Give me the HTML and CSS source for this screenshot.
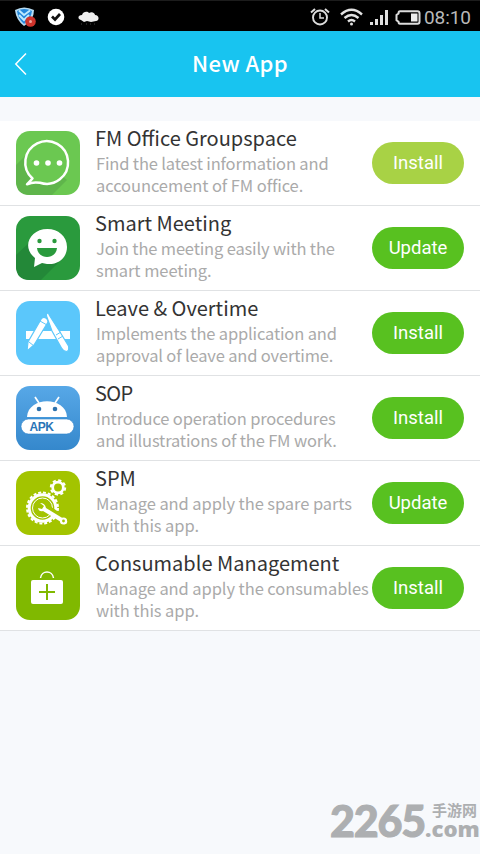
FILE: index.html
```
<!DOCTYPE html>
<html lang="en">
<head>
<meta charset="utf-8">
<title>New App</title>
<link rel="stylesheet" href="styles.css">
</head>
<body>
<div class="statusbar">
  <svg class="shield" width="23" height="22" viewBox="0 0 23 22">
    <path d="M1 4 Q10-1 20 4 Q20 14 10 20 Q2 14 1 4Z" fill="#b8dcf2"/>
    <path d="M3 5 Q10 1 18 5 Q17 13 10 18 Q4 13 3 5Z" fill="#2488dc"/>
    <path d="M5 4.500 10 9l6-4.500M5 9l5 5 5-5" fill="none" stroke="#bceaff" stroke-width="2"/>
    <circle cx="16.500" cy="15.500" r="5.300" fill="#cf332b"/><circle cx="16.500" cy="15.500" r="1.500" fill="#eda49c"/>
  </svg>
  <svg class="check" width="18" height="18" viewBox="0 0 18 18"><circle cx="9" cy="9" r="8.300" fill="#fff"/><path d="m5 8.500 3 3L13 6" fill="none" stroke="#111" stroke-width="2.700"/></svg>
  <svg class="cloud" width="21" height="15" viewBox="0 0 21 15"><path d="M3 9C-1 8 0 4 4 4 5 0 10 0 11 2c3-2 6 0 6 2 4 0 5 5 1 6l-5 1-4-1-3 1Z" fill="#eee"/><path d="M3 13h1m4 0h1m3 0h1m3 0h1" stroke="#444" stroke-width="1"/></svg>
  <span class="spacer"></span>
  <svg class="alarm" width="20" height="18" viewBox="0 0 20 18" fill="none" stroke="#ddd"><circle cx="10" cy="9.500" r="7" stroke-width="1.900"/><path d="M10 5v5h4" stroke-width="1.500"/><path d="M1 4.500 5 1m10 0 4 3.500" stroke-width="2"/></svg>
  <svg class="wifi" width="23" height="18" viewBox="0 0 23 18" fill="none" stroke="#e2e2e2" stroke-width="2.400"><path d="M1 6.500Q11.500-2.800 22 6.500M4.500 10q7-6 14 0M8 13.500q3.500-3 7 0"/><circle cx="11.500" cy="16" r="1.500" fill="#e2e2e2" stroke="none"/></svg>
  <svg class="signal" width="19" height="16" viewBox="0 0 19 16" fill="#e0e0e0"><path d="M0 13h3v3H0zM5 10h3v6H5zM10 6h3v10h-3zM15 1h3v15h-3z"/></svg>
  <svg class="battery" width="26" height="15" viewBox="0 0 26 15"><path d="M5 1.200h17.500q2 0 2 2v8.500q0 2-2 2H5q-1.500 0-1.500-2l-2-1.500V5l2-1.500Q3.500 1.200 5 1.200Z" fill="none" stroke="#ddd" stroke-width="2"/><path d="M16 3.500h6.500v8H16z" fill="#eee"/></svg>
  <span class="time">08:10</span>
</div>
<header class="header">
  <svg class="back" width="14" height="24" viewBox="0 0 14 24"><path d="M12 1.500 1.800 12 12 22.500" fill="none" stroke="#fff" stroke-width="1.500"/></svg>
  <h1>New App</h1>
</header>
<main class="list">
  <article class="row">
    <svg class="icon" viewBox="0 0 64 64"><rect width="64" height="64" rx="14" fill="#6bc851"/><path d="M0 34 14 20 51 49 36 64H14Q0 64 0 50Z" fill="#5fb54b"/><path d="M16.500 47.500A21.400 21.400 0 1 1 24 51.800Q17 50.500 11 53.300Z" fill="#6bc851" stroke="#fff" stroke-width="2.500" stroke-linejoin="round"/><g fill="#fff"><circle cx="20.500" cy="32" r="2.800"/><circle cx="32" cy="32" r="2.800"/><circle cx="43.500" cy="32" r="2.800"/></g></svg>
    <div class="info"><h2>FM Office Groupspace</h2><p><span class="tight">Find the latest information and</span><span class="snug">accouncement of FM office.</span></p></div>
    <button class="btn light">Install</button>
  </article>
  <article class="row">
    <svg class="icon" viewBox="0 0 64 64"><rect width="64" height="64" rx="14" fill="#2a9a3d"/><path d="M0 39 16 24 46 43 25 64H14Q0 64 0 50Z" fill="#238838"/><path d="M31.500 13C42 13 51 20 51 31S42 49 31 48L26 47 18 51l1-9C5 31 14 13 31.500 13Z" fill="#fff"/><g fill="#2a9a3d"><circle cx="23.500" cy="25" r="2.200"/><circle cx="38.500" cy="25" r="2.200"/><path d="M21 32h20c-1 12-19 12-20 0Z"/></g></svg>
    <div class="info"><h2>Smart Meeting</h2><p><span class="tight">Join the meeting easily with the</span><span class="snug">smart meeting.</span></p></div>
    <button class="btn">Update</button>
  </article>
  <article class="row">
    <svg class="icon" viewBox="0 0 64 64"><rect width="64" height="64" rx="14" fill="#5bc7fb"/><path d="M10 30h44v8H10z" fill="#fff"/><path d="M25.500 17.500q3-2.500 6 1L32 21 18 44l-7 6 1-9Z" fill="#fff" stroke="#5bc7fb" stroke-width="1.200"/><path d="m24 20 7 4M13 41l5 4" stroke="#5bc7fb"/><path d="M30.500 12.500q2-1 3 2L44 31l8.500 14q1 5-2 5.500-3 0-5-3.500L36 30 30.500 15Z" fill="#fff" stroke="#5bc7fb" stroke-width="1.200"/><path d="m40 34 5-3m-3 7 5-3" stroke="#5bc7fb"/></svg>
    <div class="info"><h2>Leave &amp; Overtime</h2><p><span class="tight">Implements the application and</span><span class="tight">approval of leave and overtime.</span></p></div>
    <button class="btn">Install</button>
  </article>
  <article class="row">
    <svg class="icon" viewBox="0 0 64 64"><defs><linearGradient id="blue" x2="0" y2="1"><stop stop-color="#57a8e7"/><stop offset="1" stop-color="#3588cc"/></linearGradient></defs><rect width="64" height="64" rx="14" fill="url(#blue)"/><path d="m19 11 4 6m20-6-4 6" stroke="#fff" stroke-width="1.700"/><path d="M11 31C12 10 50 10 51 31Z" fill="#fff"/><g fill="#2d72ad"><circle cx="23" cy="23" r="2.300"/><circle cx="39" cy="23" r="2.300"/></g><rect x="5" y="33" width="53" height="15" rx="7.500" fill="#fff" stroke="#2e83cb" stroke-width=".6"/><text x="13.500" y="44.700" class="apk" textLength="24.500">APK</text></svg>
    <div class="info"><h2 class="acronym">SOP</h2><p><span class="tight">Introduce operation procedures</span><span class="tight">and illustrations of the FM work.</span></p></div>
    <button class="btn">Install</button>
  </article>
  <article class="row">
    <svg class="icon" viewBox="0 0 64 64"><rect width="64" height="64" rx="14" fill="#a3c400"/><g fill="none" stroke="#fff"><circle cx="26.500" cy="37" r="13.300" stroke-width="3"/><circle cx="26.500" cy="37" r="15.500" stroke-width="2" stroke-dasharray="3 1.870"/><circle cx="26.500" cy="37" r="10" stroke-width="1"/><circle cx="42" cy="16.500" r="5.300" stroke-width="2.700"/><circle cx="42" cy="16.500" r="7.200" stroke-width="2" stroke-dasharray="3.200 2.450"/></g><path d="m28 35 20 14" stroke="#a3c400" stroke-width="7"/><path d="M24 32q5 0 6 5l18 11q4 0 3 4-3 3-6-1L27 40q-4 1-5-3l4 1 2-3Z" fill="#fff"/><circle cx="47.500" cy="50" r="3.600" fill="#fff"/><circle cx="47.500" cy="50" r="1.400" fill="#a3c400"/></svg>
    <div class="info"><h2>SPM</h2><p><span class="snug">Manage and apply the spare parts</span><span class="snug">with this app.</span></p></div>
    <button class="btn">Update</button>
  </article>
  <article class="row">
    <svg class="icon" viewBox="0 0 64 64"><rect width="64" height="64" rx="14" fill="#80b900"/><path d="M24.500 22c1-8 12-8 13 0" fill="none" stroke="#fff" stroke-width="1.500"/><rect x="15" y="24" width="32" height="24" rx="2" fill="#fff"/><path d="M31 28v16m-8-8h16" stroke="#80b900" stroke-width="2"/></svg>
    <div class="info"><h2>Consumable Management</h2><p><span class="snug">Manage and apply the consumables</span><span class="snug">with this app.</span></p></div>
    <button class="btn">Install</button>
  </article>
</main>
<footer class="watermark"><span class="digits">2265</span><span class="site"><span class="cn">手游网</span><span class="com">.com</span></span></footer>
</body>
</html>
```
FILE: styles.css
```
* { box-sizing: border-box; }
body { margin: 0; width: 480px; height: 854px; overflow: hidden; background: #f7f9fc; font-family: "Noto Sans CJK SC", sans-serif; display: flex; flex-direction: column; }
h1, h2, p { margin: 0; font-weight: 400; }
svg { display: block; flex: none; }
.statusbar { height: 31px; background: #000; border-top: 1px solid #1c1c1c; display: flex; align-items: center; padding: 2px 8px 0 14px; }
.check { margin-left: 10px; }
.cloud { margin-left: 13px; margin-top: 2px; }
.spacer { flex: 1; }
.wifi { margin-left: 10px; }
.signal { margin-left: 7px; }
.battery { margin-left: 6px; }
.time { font: 19px/24px Roboto, sans-serif; color: #b9b9b9; width: 48px; margin-left: 3px; padding-top: 1px; letter-spacing: -.1px; white-space: nowrap; }
.header { height: 66px; background: #18c4f0; display: grid; grid-template-columns: 40px 1fr 40px; align-items: center; }
.back { margin-left: 14px; }
.header h1 { color: #fff; font-size: 22px; line-height: 32px; font-weight: 500; text-align: center; letter-spacing: .4px; padding-bottom: 4px; }
.list { margin-top: 24px; }
.row { height: 85px; background: #fff; border-bottom: 1px solid #e0e2e4; display: flex; align-items: flex-start; padding: 10px 16px 0; }
.icon { width: 64px; height: 64px; }
.info { width: 276px; margin-left: 16px; flex: none; white-space: nowrap; }
.info h2 { font-size: 20px; line-height: 24px; margin: -5px 0 0 -1px; color: #333; }
.info h2.acronym { letter-spacing: -.6px; }
.info p { font-size: 16.500px; line-height: 22px; color: #aaa; margin-top: 2px; }
.info p span { display: block; }
.tight { letter-spacing: -.16px; }
.snug { letter-spacing: -.08px; }
.btn { width: 92px; height: 42px; border: 0; border-radius: 21px; background: #58c120; color: #fff; font: 18.500px/42px Roboto, sans-serif; padding: 0; margin-top: 11px; flex: none; }
.btn.light { background: #a8d245; }
.apk { font: bold 12px "Liberation Sans", sans-serif; fill: #2a75b7; }
.watermark { margin: auto 0 12px 330px; display: flex; align-items: flex-end; color: #adafb1; height: 44px; white-space: nowrap; }
.digits { font: 900 43px/42px Lato, sans-serif; width: 95px; letter-spacing: -1.200px; -webkit-text-stroke: 1px #adafb1; }
.site { display: flex; flex-direction: column; width: 55px; height: 42px; }
.cn { font-size: 15px; font-weight: 700; line-height: 19px; margin-left: 7px; }
.com { font: 800 21px/21px "Open Sans", sans-serif; transform: scaleX(1.060); transform-origin: left; }
```
